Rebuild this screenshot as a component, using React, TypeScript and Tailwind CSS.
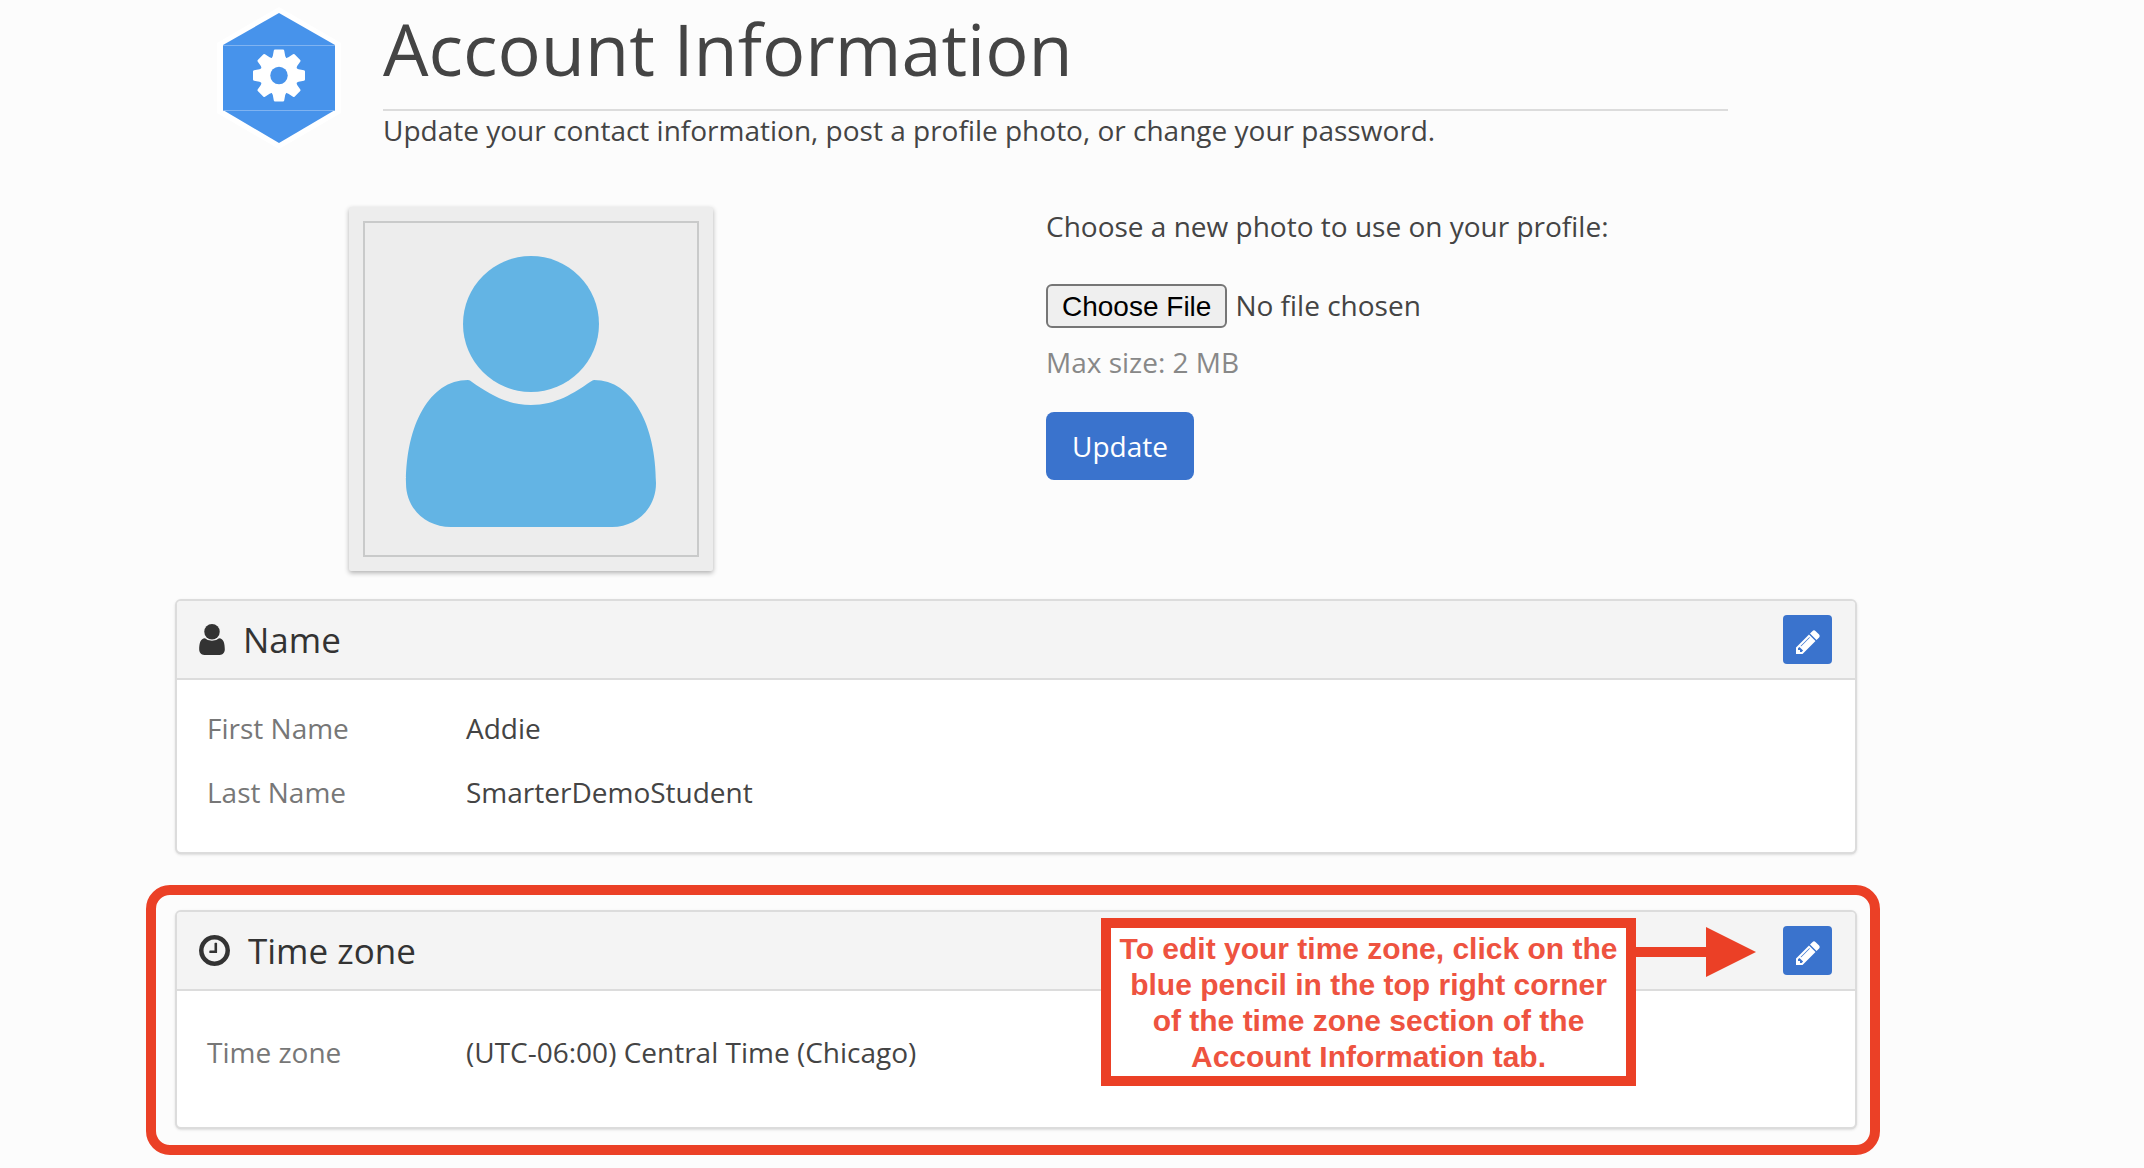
import { useState, type ReactNode } from 'react'

interface PanelProps {
  icon: ReactNode
  title: string
  rows: { label: string; value: string }[]
  bodyClass: string
}

const NAME_ROWS = [
  { label: 'First Name', value: 'Addie' },
  { label: 'Last Name', value: 'SmarterDemoStudent' }
]

const TIME_ZONE_ROWS = [{ label: 'Time zone', value: '(UTC-06:00) Central Time (Chicago)' }]

const GEAR_TEETH = [0, 45, 90, 135, 180, 225, 270, 315]

function PencilIcon() {
  return (
    <svg viewBox="0 0 1792 1792" className="mt-1 h-7 w-7 fill-current" aria-hidden="true">
      <path d="M491 1536l91-91-235-235-91 91v107h128v128h107zm523-928q0-22-22-22-10 0-17 7l-542 542q-7 7-7 17 0 22 22 22 10 0 17-7l542-542q7-7 7-17zm-54-192l416 416-832 832h-416v-416zm683 96q0 53-37 90l-166 166-416-416 166-165q36-38 90-38 53 0 91 38l235 234q37 39 37 91z" />
    </svg>
  )
}

function UserIcon() {
  return (
    <svg viewBox="28 45 76 92" className="h-[31px] w-[26px] fill-current" aria-hidden="true">
      <circle cx="66" cy="68" r="23" />
      <path d="M45 87C32 87 28 102 28 121C28 130 34 137 43 137H89C98 137 104 130 104 121C104 102 100 87 87 87Q78 95 66 95Q54 95 45 87Z" />
    </svg>
  )
}

function ClockIcon() {
  return (
    <svg viewBox="128 128 1536 1536" className="h-[31px] w-[31px] fill-current" aria-hidden="true">
      <path d="M1024 544v448q0 14-9 23t-23 9h-320q-14 0-23-9t-9-23v-64q0-14 9-23t23-9h224v-352q0-14 9-23t23-9h64q14 0 23 9t9 23zm416 352q0-148-73-273t-198-198-273-73-273 73-198 198-73 273 73 273 198 198 273 73 273-73 198-198 73-273zm224 0q0 209-103 385.5t-279.5 279.5-385.5 103-385.5-103-279.5-279.5-103-385.5 103-385.5 279.5-279.5 385.5-103 385.5 103 279.5 279.5 103 385.5z" />
    </svg>
  )
}

function HexBadge() {
  return (
    <svg viewBox="0 0 124 142" className="h-[142px] w-[124px] shrink-0" aria-hidden="true">
      <path d="M62 0L124 36V106L62 142L0 106V36Z" fill="#fff" />
      <path d="M62 6L118 38V103L62 136L6 103V38Z" fill="#4793eb" />
      <path d="M6 38.5H118M6 103.5H118" stroke="#7fb3f1" />
      <g fill="#fff" transform="translate(62 68.5)">
        {GEAR_TEETH.map(a => (
          <path key={a} d="M-7.4 -17L-6.2 -19.5L-5.2 -25Q-5 -26 -4 -26H4Q5 -26 5.2 -25L6.2 -19.5L7.4 -17Z" transform={`rotate(${a})`} />
        ))}
        <circle r="19" />
        <circle r="8.7" fill="#4793eb" />
      </g>
    </svg>
  )
}

function Panel({ icon, title, rows, bodyClass }: PanelProps) {
  return (
    <section className="rounded-md border-2 border-[#dcdcdc] bg-white shadow-sm">
      <header className="flex items-center justify-between rounded-t-sm border-b-2 border-[#dcdcdc] bg-[#f4f4f4] py-3.5 pr-[23px] pl-[22px] text-[#333]">
        <h2 className="flex items-center gap-[18px] text-[35px] leading-[49px]">
          {icon}
          {title}
        </h2>
        <button
          aria-label={`Edit ${title}`}
          className="flex h-[49px] w-[49px] items-center justify-center rounded bg-[#3a73cd] text-white hover:bg-[#2f62b4]"
        >
          <PencilIcon />
        </button>
      </header>
      <dl className={bodyClass}>
        {rows.map(row => (
          <div key={row.label} className="flex leading-[64px]">
            <dt className="w-[259px] shrink-0 text-[#777]">{row.label}</dt>
            <dd>{row.value}</dd>
          </div>
        ))}
      </dl>
    </section>
  )
}

function Callout() {
  return (
    <div className="absolute top-[23px] right-[114px] flex items-start">
      <p className="w-[535px] border-10 border-[#eb4026] bg-white pt-[3px] pb-px text-center font-['Liberation_Sans',Arial,sans-serif] text-[30px] leading-9 font-bold text-[#ee5340]">
        To edit your time zone, click on the
        <br />
        blue pencil in the top right corner
        <br />
        of the time zone section of the
        <br />
        Account Information tab.
      </p>
      <svg viewBox="0 0 120 50" className="mt-[9px] h-[50px] w-[120px] fill-[#eb4026]" aria-hidden="true">
        <path d="M0 20H70V0L120 25L70 50V30H0Z" />
      </svg>
    </div>
  )
}

export default function App() {
  const [photo, setPhoto] = useState<File | null>(null)

  return (
    <div className="min-h-screen bg-[#fcfcfc] pt-[7px] pr-[264px] pb-3 pl-[146px] font-['Open_Sans','Noto_Sans',sans-serif] text-[28px] text-[#444]">
      <header className="flex items-start pr-[152px] pl-[71px]">
        <HexBadge />
        <div className="ml-[42px] grow">
          <h1 className="border-b-2 border-[#dcdcdc] pb-5 text-[72px] leading-[82px]">Account Information</h1>
          <p className="leading-[38px]">Update your contact information, post a profile photo, or change your password.</p>
        </div>
      </header>

      <div className="mt-[58px] flex pl-[203px]">
        <div className="h-[364px] w-[364px] shrink-0 rounded-xs bg-[#ededed] p-3.5 shadow-[0_2px_5px_rgba(0,0,0,0.3)]">
          <svg viewBox="0 0 332 332" className="h-full w-full border-2 border-[#c9caca]" role="img" aria-label="Profile photo">
            <g fill="#63b4e4">
              <circle cx="166" cy="101" r="68" />
              <path d="M103 157C64 157 41 203 41 260C41 286 61 304 86 304H247C271 304 291 286 291 260C291 203 268 157 229 157Q228 157 225 159C209 170 191 182 166 182C141 182 123 170 107 159Q105 157 103 157Z" />
            </g>
          </svg>
        </div>
        <form className="ml-[333px] flex flex-col items-start" onSubmit={e => e.preventDefault()}>
          <label htmlFor="photo" className="leading-[38px]">
            Choose a new photo to use on your profile:
          </label>
          <input
            id="photo"
            type="file"
            accept="image/*"
            onChange={e => setPhoto(e.target.files?.[0] ?? null)}
            className="mt-[39px] w-[500px] file:mr-2 file:h-11 file:rounded-md file:border-2 file:border-solid file:border-[#767676] file:bg-[#efefef] file:px-3.5 file:font-['Liberation_Sans',Arial,sans-serif] file:text-[28px] file:text-black"
          />
          <p className="mt-3.5 leading-10 text-[#888]">Max size: 2 MB</p>
          <button
            type="submit"
            title={photo?.name}
            className="mt-[30px] h-[68px] rounded-lg bg-[#3a73cd] px-[26px] text-white hover:bg-[#2f62b4]"
          >
            Update
          </button>
        </form>
      </div>

      <div className="mt-7 pr-[23px] pl-[29px]">
        <Panel icon={<UserIcon />} title="Name" rows={NAME_ROWS} bodyClass="px-[30px] pt-4 pb-7" />
      </div>

      <div className="relative mt-[31px] rounded-3xl border-10 border-[#eb4026] pt-[15px] pr-[13px] pb-4 pl-[19px]">
        <Panel icon={<ClockIcon />} title="Time zone" rows={TIME_ZONE_ROWS} bodyClass="px-[30px] pt-[29px] pb-[43px]" />
        <Callout />
      </div>
    </div>
  )
}
